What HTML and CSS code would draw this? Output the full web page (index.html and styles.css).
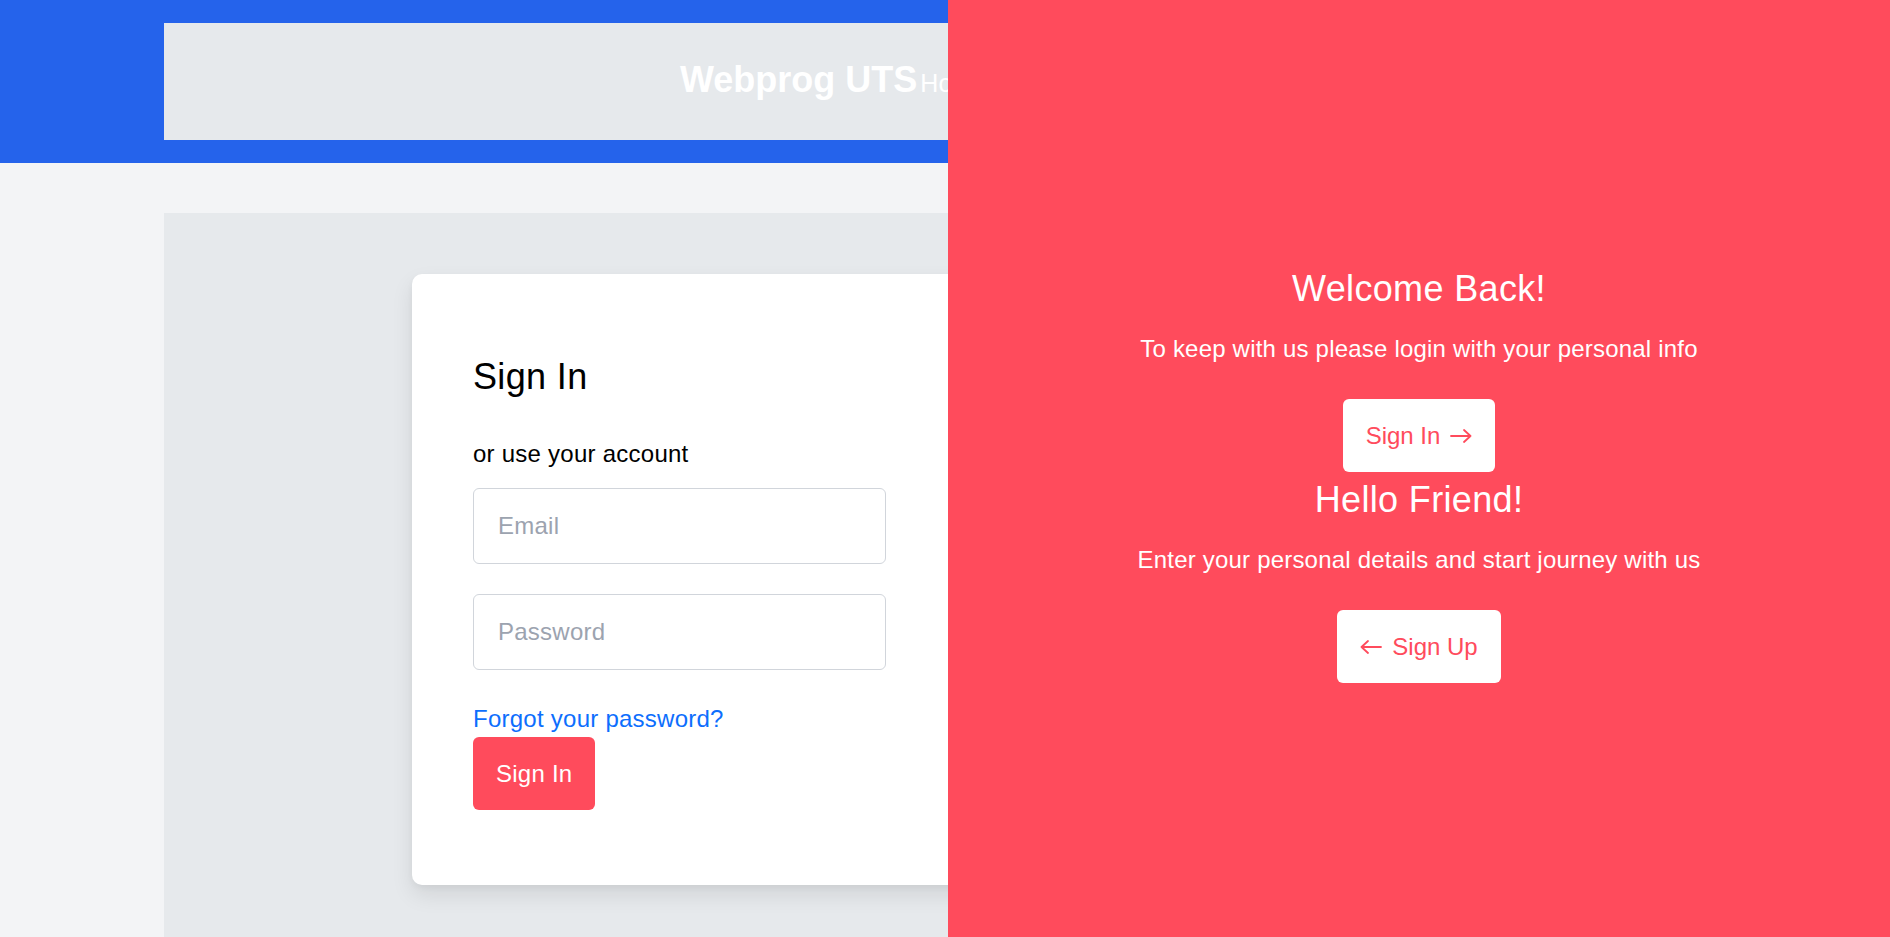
FILE: index.html
```html
<!DOCTYPE html>
<html lang="en">
<head>
<meta charset="utf-8">
<title>Webprog UTS</title>
<link rel="stylesheet" href="styles.css">
</head>
<body>
<header class="site-header">
  <div class="header-inner">
    <div class="brand-row">
      <span class="brand">Webprog UTS</span>
      <nav class="nav">
        <a class="nav-link" href="#">Home</a>
        <a class="nav-link" href="#">About</a>
        <a class="nav-link" href="#">Login</a>
      </nav>
    </div>
  </div>
</header>

<main class="main">
  <div class="stage">
    <div class="card">
      <form class="signin-form">
        <h1 class="form-title">Sign In</h1>
        <p class="form-sub">or use your account</p>
        <input class="field" type="email" placeholder="Email">
        <input class="field field-gap" type="password" placeholder="Password">
        <a class="forgot" href="#">Forgot your password?</a>
        <button class="btn-primary" type="button">Sign In</button>
      </form>
      <div class="card-right"></div>
    </div>
  </div>
</main>

<aside class="overlay">
  <div class="overlay-block">
    <h1 class="overlay-title">Welcome Back!</h1>
    <p class="overlay-text">To keep with us please login with your personal info</p>
    <button class="btn-ghost" type="button">
      <span>Sign In</span>
      <svg class="arrow" width="22" height="14" viewBox="0 0 22 14" aria-hidden="true"><path d="M1 7H20.5M14 1L20.5 7L14 13" fill="none" stroke="currentColor" stroke-width="1.8" stroke-linecap="round" stroke-linejoin="round"/></svg>
    </button>
  </div>
  <div class="overlay-block overlay-block-second">
    <h1 class="overlay-title">Hello Friend!</h1>
    <p class="overlay-text">Enter your personal details and start journey with us</p>
    <button class="btn-ghost" type="button">
      <svg class="arrow" width="22" height="14" viewBox="0 0 22 14" aria-hidden="true"><path d="M21 7H1.5M8 1L1.5 7L8 13" fill="none" stroke="currentColor" stroke-width="1.8" stroke-linecap="round" stroke-linejoin="round"/></svg>
      <span>Sign Up</span>
    </button>
  </div>
</aside>
</body>
</html>
```

FILE: styles.css
```css
* { box-sizing: border-box; }

html, body {
  margin: 0;
  padding: 0;
}

body {
  font-family: "Liberation Sans", Arial, sans-serif;
  background: #f3f4f6;
  color: #000;
  min-height: 100vh;
  overflow: hidden;
}

/* Header */
.site-header {
  background: #2563eb;
  padding: 23px 164px;
}

.header-inner {
  background: #e6e9ec;
  padding: 35px 0 39px 516px;
  display: flex;
  justify-content: flex-start;
}

.brand-row {
  display: flex;
  align-items: baseline;
}

.brand {
  font-size: 36px;
  line-height: 43px;
  font-weight: 700;
  color: #fff;
  white-space: nowrap;
}

.nav {
  display: flex;
  gap: 24px;
  margin-left: 3px;
}

.nav-link {
  font-size: 25px;
  line-height: 25px;
  color: #fff;
  text-decoration: none;
}

/* Main */
.main {
  padding: 50px 164px 0;
}

.stage {
  background: #e6e9ec;
  padding: 61px 0 80px;
  display: flex;
  justify-content: center;
}

.card {
  width: 1066px;
  background: #fff;
  border-radius: 10px;
  box-shadow: 0 10px 22px rgba(0, 0, 0, 0.09), 0 3px 6px rgba(0, 0, 0, 0.04);
  display: grid;
  grid-template-columns: 535px 1fr;
}

.signin-form {
  display: flex;
  flex-direction: column;
  align-items: flex-start;
  padding: 81px 61px 75px;
  margin: 0;
}

.form-title {
  margin: 0;
  font-size: 36px;
  line-height: 43px;
  font-weight: 400;
  color: #000;
  letter-spacing: 0.35px;
}

.form-sub {
  margin: 38px 0 16px;
  font-size: 24px;
  line-height: 36px;
  letter-spacing: 0.25px;
}

.field {
  width: 100%;
  height: 76px;
  border: 1px solid #d1d5db;
  border-radius: 6px;
  padding: 0 24px;
  font-family: inherit;
  font-size: 24px;
  letter-spacing: 0.25px;
  color: #111;
  background: #fff;
  outline: none;
}

.field::placeholder {
  color: #9ca3af;
}

.field-gap {
  margin-top: 30px;
}

.forgot {
  margin-top: 31px;
  font-size: 24px;
  line-height: 36px;
  letter-spacing: 0.25px;
  color: #0d6efd;
  text-decoration: none;
}

.btn-primary {
  height: 73px;
  padding: 0 23px;
  border: none;
  border-radius: 6px;
  background: #ff4b5c;
  color: #fff;
  font-family: inherit;
  font-size: 24px;
  letter-spacing: 0.25px;
  cursor: pointer;
}

/* Overlay */
.overlay {
  position: fixed;
  top: 0;
  right: 0;
  width: 942px;
  height: 100vh;
  background: #ff4b5c;
  color: #fff;
  text-align: center;
  padding-top: 267px;
  display: flex;
  flex-direction: column;
  align-items: center;
}

.overlay-block {
  display: flex;
  flex-direction: column;
  align-items: center;
}

.overlay-block-second {
  margin-top: 6px;
}

.overlay-title {
  margin: 0;
  font-size: 36px;
  line-height: 43px;
  font-weight: 400;
  letter-spacing: 0.35px;
}

.overlay-text {
  margin: 21px 0 32px;
  font-size: 24px;
  line-height: 36px;
  letter-spacing: 0.2px;
}

.btn-ghost {
  height: 73px;
  padding: 0 23px;
  border: none;
  border-radius: 6px;
  background: #fff;
  color: #ff4b5c;
  font-family: inherit;
  font-size: 24px;
  display: inline-flex;
  align-items: center;
  gap: 10px;
  cursor: pointer;
}

.arrow {
  display: block;
}
```
